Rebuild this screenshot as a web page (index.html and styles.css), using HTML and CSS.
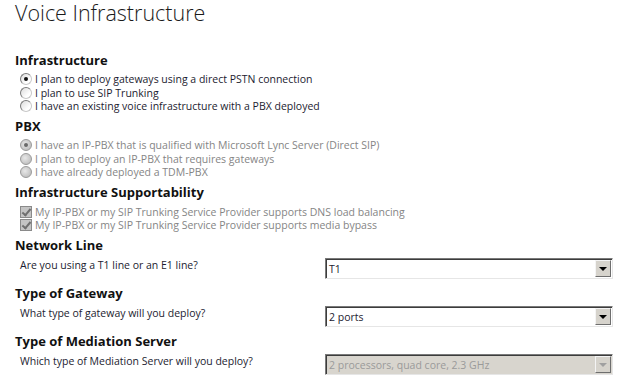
FILE: index.html
```html
<!DOCTYPE html>
<html lang="en">
  <head>
    <meta charset="UTF-8" />
    <title>Voice Infrastructure</title>
    <link rel="stylesheet" href="styles.css">
  </head>
  <body>
    <h1 class="page-title">Voice Infrastructure</h1>

    <section class="group">
      <h2 class="group-title">Infrastructure</h2>
      <ul class="choices">
        <li class="choice"><span class="radio checked"></span>I plan to deploy gateways using a direct PSTN connection</li>
        <li class="choice"><span class="radio"></span>I plan to use SIP Trunking</li>
        <li class="choice"><span class="radio"></span>I have an existing voice infrastructure with a PBX deployed</li>
      </ul>
    </section>

    <section class="group">
      <h2 class="group-title">PBX</h2>
      <ul class="choices disabled">
        <li class="choice"><span class="radio checked"></span>I have an IP-PBX that is qualified with Microsoft Lync Server (Direct SIP)</li>
        <li class="choice"><span class="radio"></span>I plan to deploy an IP-PBX that requires gateways</li>
        <li class="choice"><span class="radio"></span>I have already deployed a TDM-PBX</li>
      </ul>
    </section>

    <section class="group">
      <h2 class="group-title">Infrastructure Supportability</h2>
      <ul class="choices disabled">
        <li class="choice"><span class="check"></span>My IP-PBX or my SIP Trunking Service Provider supports DNS load balancing</li>
        <li class="choice"><span class="check"></span>My IP-PBX or my SIP Trunking Service Provider supports media bypass</li>
      </ul>
    </section>

    <section class="group">
      <h2 class="group-title">Network Line</h2>
      <div class="field">
        <span class="field-label">Are you using a T1 line or an E1 line?</span>
        <div class="combo">
          <span class="combo-value">T1</span>
          <span class="combo-button"><span class="arrow"></span></span>
        </div>
      </div>
    </section>

    <section class="group">
      <h2 class="group-title">Type of Gateway</h2>
      <div class="field">
        <span class="field-label">What type of gateway will you deploy?</span>
        <div class="combo">
          <span class="combo-value">2 ports</span>
          <span class="combo-button"><span class="arrow"></span></span>
        </div>
      </div>
    </section>

    <section class="group">
      <h2 class="group-title">Type of Mediation Server</h2>
      <div class="field">
        <span class="field-label">Which type of Mediation Server will you deploy?</span>
        <div class="combo disabled">
          <span class="combo-value">2 processors, quad core, 2.3 GHz</span>
          <span class="combo-button"><span class="arrow"></span></span>
        </div>
      </div>
    </section>
  </body>
</html>
```

FILE: styles.css
```css
* {
  margin: 0;
  padding: 0;
  box-sizing: border-box;
}

body {
  padding: 0 5px 0 15px;
  background: #fff;
  font-family: "Open Sans", "Liberation Sans", sans-serif;
  color: #1c1c30;
}

.page-title {
  font-size: 21.5px;
  font-weight: 300;
  line-height: 26px;
  color: #1a1a1a;
}

.group {
  margin-top: 5px;
}

.page-title + .group {
  margin-top: 25.5px;
}

.group-title {
  font-size: 13px;
  font-weight: 700;
  line-height: 16px;
  color: #111;
}

.choices {
  list-style: none;
  margin-top: 5px;
  padding-left: 5px;
}

.choice {
  display: flex;
  align-items: center;
  height: 13.4px;
  font-size: 10.5px;
  white-space: nowrap;
}

.choices.disabled .choice {
  color: #858585;
}

/* radio */
.radio {
  position: relative;
  width: 12px;
  height: 12px;
  margin-right: 3px;
  border-radius: 50%;
  border: 1px solid #7b7b7b;
  border-bottom-color: #c8c8c8;
  border-right-color: #c8c8c8;
  background: linear-gradient(135deg, #dcdcdc, #fff 70%);
  flex-shrink: 0;
}

.radio.checked::after {
  content: "";
  position: absolute;
  left: 3px;
  top: 3px;
  width: 4px;
  height: 4px;
  border-radius: 50%;
  background: #111;
}

.choices.disabled .radio {
  border-color: #9a9a9a;
  background: radial-gradient(circle at 40% 40%, #e8e8e8, #b4b4b4);
}

.choices.disabled .radio.checked::after {
  background: #6a6a6a;
}

/* checkbox */
.check {
  position: relative;
  width: 12px;
  height: 12px;
  margin-right: 3px;
  border: 1px solid #8a8a8a;
  background: #c4c4c4;
  flex-shrink: 0;
}

.check::after {
  content: "";
  position: absolute;
  left: 3px;
  top: 0;
  width: 3px;
  height: 7px;
  border: solid #6f6f6f;
  border-width: 0 2px 2px 0;
  transform: rotate(40deg);
}

/* question rows */
.field {
  display: flex;
  align-items: flex-start;
  margin-top: 5px;
  padding-left: 5px;
  height: 22px;
}

.field-label {
  width: 305px;
  flex-shrink: 0;
  font-size: 10.5px;
  line-height: 14px;
  white-space: nowrap;
  color: #1c1c30;
}

.combo {
  display: flex;
  align-items: center;
  flex-shrink: 0;
  width: 288px;
  height: 21px;
  margin-top: 0.5px;
  border: 1px solid;
  border-color: #7a7a7a #e6e6e6 #e6e6e6 #7a7a7a;
  box-shadow: inset 1px 1px 0 #3c3c3c;
  background: #fff;
}

.combo-value {
  flex: 1;
  padding-left: 3px;
  font-size: 10.5px;
  color: #1c1c30;
}

.combo-button {
  display: flex;
  align-items: center;
  justify-content: center;
  width: 16px;
  height: 17px;
  margin-right: 1px;
  border: 1px solid;
  border-color: #f4f4f4 #6e6e6e #6e6e6e #f4f4f4;
  background: #d6d3cc;
}

.arrow {
  width: 0;
  height: 0;
  border-left: 4px solid transparent;
  border-right: 4px solid transparent;
  border-top: 4px solid #000;
}

.combo.disabled {
  background: #d8d5ce;
}

.combo.disabled .combo-value {
  color: #9a9a9a;
}

.combo.disabled .arrow {
  border-top-color: #a0a0a0;
}
```
